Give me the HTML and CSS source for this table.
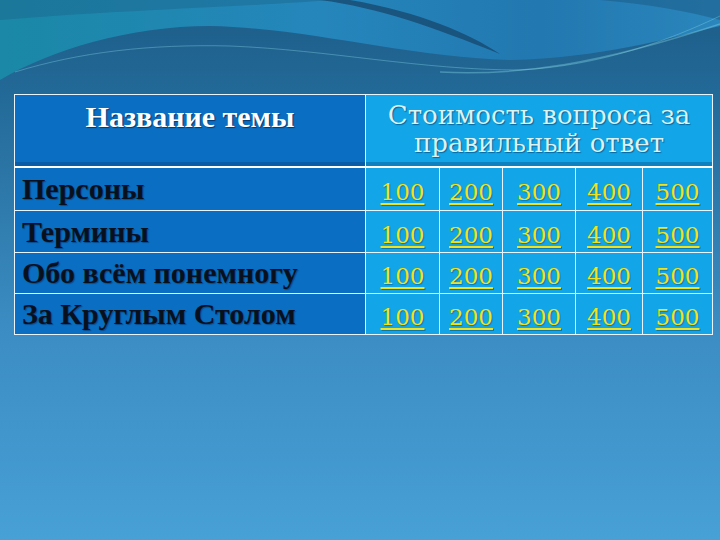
FILE: index.html
```html
<!DOCTYPE html>
<html lang="ru">
<head>
<meta charset="utf-8">
<link rel="stylesheet" href="styles.css">
</head>
<body>
<div class="slide">
  <svg class="bg" width="720" height="540" viewBox="0 0 720 540">
    <defs>
      <linearGradient id="base" x1="0" y1="0" x2="0" y2="1">
        <stop offset="0" stop-color="#1d5c88"/>
        <stop offset="0.18" stop-color="#236a98"/>
        <stop offset="0.6" stop-color="#3b8cc2"/>
        <stop offset="1" stop-color="#47a0d6"/>
      </linearGradient>
      <linearGradient id="teal" x1="0" y1="0" x2="1" y2="0">
        <stop offset="0" stop-color="#1a88a6"/>
        <stop offset="0.45" stop-color="#2586bc"/>
        <stop offset="0.75" stop-color="#2278b0"/>
        <stop offset="1" stop-color="#2a86bc"/>
      </linearGradient>
    </defs>
    <rect width="720" height="540" fill="url(#base)"/>
    <path d="M0,0 L0,80 C50,50 130,26 210,26 C310,28 400,56 510,60 C600,58 670,38 720,26 L720,0 Z" fill="url(#teal)"/>
    <path d="M0,0 L0,20 C120,10 260,6 330,0 Z" fill="#1c6890" opacity="0.5"/>
    <path d="M320,0 C380,8 430,26 500,54 C470,34 420,12 350,0 Z" fill="#174a70" opacity="0.8"/>
    <path d="M600,0 L720,0 L720,20 C690,12 650,4 600,0 Z" fill="#1d5f8c" opacity="0.6"/>
    <path d="M15,72 C80,52 150,44 230,46 C330,50 420,70 520,70 C600,66 670,40 720,16" fill="none" stroke="#7fd0e0" stroke-width="1" opacity="0.4"/>
    <path d="M440,72 C520,76 600,64 720,24" fill="none" stroke="#8fe3ee" stroke-width="1.5" opacity="0.35"/>
  </svg>
  <table class="board">
    <colgroup>
      <col class="w-topic">
      <col class="w1"><col class="w2"><col class="w3"><col class="w4"><col class="w5">
    </colgroup>
    <tr class="head">
      <th class="topic-head">Название темы</th>
      <th class="cost-head" colspan="5">Стоимость вопроса за правильный ответ</th>
    </tr>
    <tr class="r1">
      <td class="topic">Персоны</td>
      <td class="cost"><a>100</a></td><td class="cost"><a>200</a></td><td class="cost"><a>300</a></td><td class="cost"><a>400</a></td><td class="cost"><a>500</a></td>
    </tr>
    <tr class="r2">
      <td class="topic">Термины</td>
      <td class="cost"><a>100</a></td><td class="cost"><a>200</a></td><td class="cost"><a>300</a></td><td class="cost"><a>400</a></td><td class="cost"><a>500</a></td>
    </tr>
    <tr class="r3">
      <td class="topic">Обо всём понемногу</td>
      <td class="cost"><a>100</a></td><td class="cost"><a>200</a></td><td class="cost"><a>300</a></td><td class="cost"><a>400</a></td><td class="cost"><a>500</a></td>
    </tr>
    <tr class="r4">
      <td class="topic">За Круглым Столом</td>
      <td class="cost"><a>100</a></td><td class="cost"><a>200</a></td><td class="cost"><a>300</a></td><td class="cost"><a>400</a></td><td class="cost"><a>500</a></td>
    </tr>
  </table>
</div>
</body>
</html>
```
FILE: styles.css
```css
html, body {
  margin: 0;
  padding: 0;
}
body {
  width: 720px;
  height: 540px;
  overflow: hidden;
  background: #3b8cc2;
}
.slide {
  position: relative;
  width: 720px;
  height: 540px;
  box-sizing: border-box;
  padding: 94px 0 0 12px;
  border-left: 2px solid #134a70;
  border-bottom: 2px solid #134a70;
  border-right: 1px solid #1a5a85;
}
.bg {
  position: absolute;
  left: -2px;
  top: 0;
  z-index: 0;
}
.board {
  position: relative;
  z-index: 1;
  width: 698px;
  border-collapse: collapse;
  table-layout: fixed;
  font-family: "Liberation Serif", "DejaVu Serif", serif;
}
.w-topic { width: 351px; }
.w1 { width: 74px; }
.w2 { width: 63px; }
.w3 { width: 73px; }
.w4 { width: 67px; }
.w5 { width: 70px; }
.board td, .board th {
  border: 1px solid #e8f4ff;
  padding: 0;
}
.board .topic-head, .board .topic {
  background: #0a6fc2;
}
.head {
  height: 72px;
}
.board .head th {
  border-bottom: 2px solid #ffffff;
  box-shadow: inset 0 -4px 0 rgba(10, 60, 120, 0.35);
}
.board .topic-head {
  vertical-align: top;
  color: #ffffff;
  font-weight: bold;
  font-size: 30px;
  line-height: 34px;
  padding-top: 5px;
  text-shadow: 1px 1px 1px rgba(0, 20, 60, 0.6);
}
.board .cost-head {
  background: #12a6e8;
  color: #dcf2f2;
  font-weight: normal;
  font-family: "DejaVu Serif", serif;
  font-size: 26px;
  line-height: 28px;
  padding-top: 6px;
  vertical-align: top;
  text-shadow: 1px 1px 1px rgba(0, 40, 80, 0.5);
}
.r1 { height: 44px; }
.r2 { height: 42px; }
.r3 { height: 41px; }
.r4 { height: 41px; }
.board .topic {
  color: #08101e;
  font-weight: bold;
  font-size: 30px;
  line-height: 32px;
  padding-left: 7px;
  text-shadow: 1px 1px 1px rgba(0, 30, 80, 0.45);
}
.board .cost {
  background: #12a6e8;
  text-align: center;
  padding-top: 6px;
}
.cost a {
  color: #f2e21e;
  font-family: "DejaVu Serif", serif;
  font-size: 23px;
  line-height: 28px;
  text-decoration: underline;
  text-decoration-thickness: 2px;
  text-underline-offset: 3px;
  text-shadow: 1px 1px 1px rgba(0, 50, 90, 0.4);
}
```
